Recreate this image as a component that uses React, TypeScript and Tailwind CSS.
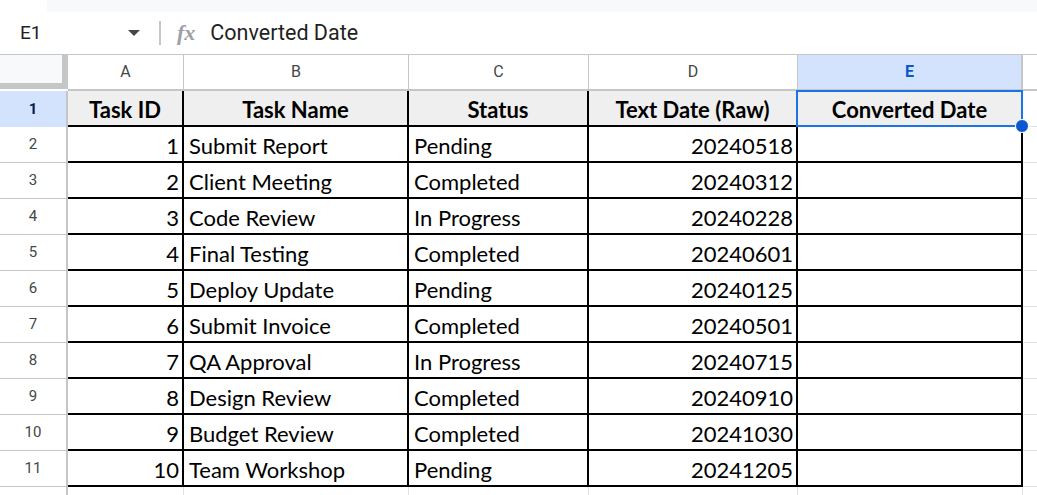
import React from 'react';

const ROWS: [number, string, string, string][] = [
  [1, 'Submit Report', 'Pending', '20240518'],
  [2, 'Client Meeting', 'Completed', '20240312'],
  [3, 'Code Review', 'In Progress', '20240228'],
  [4, 'Final Testing', 'Completed', '20240601'],
  [5, 'Deploy Update', 'Pending', '20240125'],
  [6, 'Submit Invoice', 'Completed', '20240501'],
  [7, 'QA Approval', 'In Progress', '20240715'],
  [8, 'Design Review', 'Completed', '20240910'],
  [9, 'Budget Review', 'Completed', '20241030'],
  [10, 'Team Workshop', 'Pending', '20241205'],
];

const COLS = 'grid grid-cols-[68px_116px_225px_180px_209px_225px_1fr]';
const CELL = "font-['Lato',sans-serif] text-[22px] leading-[26px] text-black";

export default function App() {
  return (
    <div className="w-[1037px] h-[495px] overflow-hidden bg-white font-['Roboto',sans-serif]">
      {/* Top strip */}
      <div className="flex h-[12px]">
        <div className="w-[47px] bg-white" />
        <div className="flex-1 bg-[#f8f9fa]" />
      </div>

      {/* Formula bar */}
      <div className="flex items-center h-[43px] border-b border-[#c7c7c7]">
        <div className="w-[120px] pl-[20px] text-[19px] text-[#1f1f1f]">E1</div>
        <svg width="12" height="6" viewBox="0 0 12 6" className="ml-[8px]">
          <path d="M0 0h12L6 6z" fill="#444746" />
        </svg>
        <div className="ml-[19px] w-[2px] h-[24px] bg-[#c7c7c7]" />
        <span className="ml-[16px] font-['Liberation_Serif',serif] italic font-bold text-[22px] text-[#9aa0a6] leading-none">fx</span>
        <span className="ml-[15px] text-[21.5px] text-[#1f1f1f]">Converted Date</span>
      </div>

      {/* Column headers */}
      <div className={`${COLS} h-[36px]`}>
        <div className="bg-[#f8f9fa] border-r-[6px] border-b-[6px] border-[#c4c7c5] h-[34px]" />
        {['A', 'B', 'C', 'D'].map((c) => (
          <div key={c} className="flex items-center justify-center text-[16px] text-[#444746] border-r border-b-2 border-[#c4c7c5]">
            {c}
          </div>
        ))}
        <div className="flex items-center justify-center text-[16px] font-bold text-[#0b57d0] bg-[#d3e3fd] border-r-2 border-b-2 border-[#c4c7c5]">
          E
        </div>
        <div className="border-b-2 border-[#c4c7c5]" />
      </div>

      {/* Row 1: headers */}
      <div className={`${COLS} h-[36px]`}>
        <div className="flex items-center justify-center bg-[#d3e3fd] text-[15px] font-bold text-[#041e49] border-r-2 border-[#c4c7c5]">1</div>
        {['Task ID', 'Task Name', 'Status', 'Text Date (Raw)'].map((h) => (
          <div key={h} className={`${CELL} font-bold flex items-end justify-center pb-[2px] bg-[#efefef] border-r-2 border-b-2 border-black`}>
            {h}
          </div>
        ))}
        <div className={`${CELL} relative font-bold flex items-end justify-center pb-[2px] bg-[#efefef] border-r-2 border-b-2 border-black`}>
          Converted Date
          <div className="absolute -left-[2px] -top-[1px] -right-[2px] -bottom-[2px] border-2 border-[#1a73e8]" />
          <div className="absolute -right-[8px] -bottom-[8px] w-[14px] h-[14px] rounded-full bg-[#0b57d0] border border-white" />
        </div>
        <div className="border-b border-[#e1e1e1]" />
      </div>

      {/* Data rows */}
      {ROWS.map(([id, name, status, raw], i) => (
        <div key={id} className={`${COLS} h-[36px]`}>
          <div className="flex items-center justify-center text-[15px] text-[#444746] border-r-2 border-b border-[#c4c7c5]">
            {i + 2}
          </div>
          <div className={`${CELL} flex items-end justify-end pr-[3px] pb-[2px] border-r-2 border-b-2 border-black`}>{id}</div>
          <div className={`${CELL} flex items-end pl-[5px] pb-[2px] border-r-2 border-b-2 border-black`}>{name}</div>
          <div className={`${CELL} flex items-end pl-[5px] pb-[2px] border-r-2 border-b-2 border-black`}>{status}</div>
          <div className={`${CELL} flex items-end justify-end pr-[3px] pb-[2px] border-r-2 border-b-2 border-black`}>{raw}</div>
          <div className="border-r-2 border-b-2 border-black" />
          <div className="border-b border-[#e1e1e1]" />
        </div>
      ))}

      {/* Next row (partly visible) */}
      <div className={`${COLS} h-[12px]`}>
        <div className="border-r-2 border-[#c4c7c5]" />
        <div className="border-r border-[#e1e1e1]" />
        <div className="border-r border-[#e1e1e1]" />
        <div className="border-r border-[#e1e1e1]" />
        <div className="border-r border-[#e1e1e1]" />
        <div className="border-r border-[#e1e1e1]" />
        <div />
      </div>
    </div>
  );
}
